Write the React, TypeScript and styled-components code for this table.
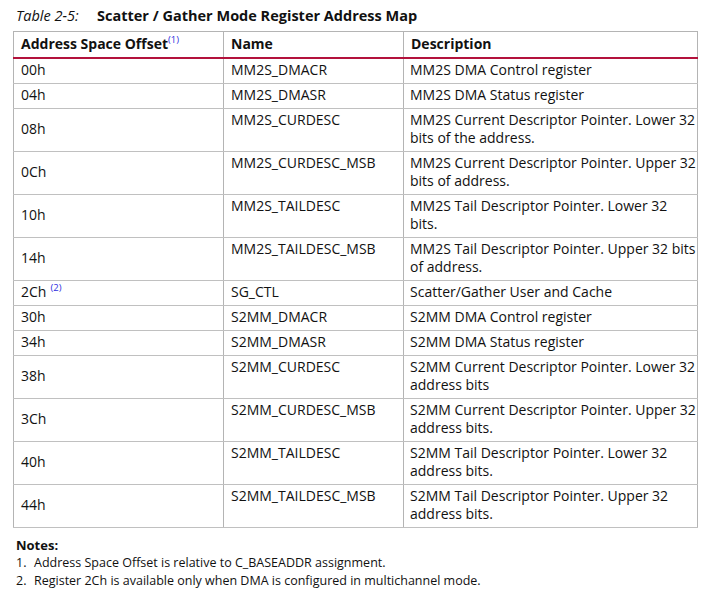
import React from 'react';
import styled, { createGlobalStyle } from 'styled-components';

const GlobalStyle = createGlobalStyle`
  body {
    margin: 0;
    background: #fff;
    font-family: 'Open Sans', 'Noto Sans', sans-serif;
    color: #111;
  }
`;

const Page = styled.div`
  width: 703px;
  padding: 6px 6px 0 13px;
  box-sizing: border-box;
`;

const Caption = styled.div`
  display: flex;
  align-items: baseline;
  height: 25px;
  padding-left: 3px;
  font-size: 14.5px;

  em {
    width: 81px;
    font-style: italic;
  }

  strong {
    font-weight: 700;
  }
`;

const Table = styled.table`
  width: 684px;
  border-collapse: collapse;
  table-layout: fixed;
  font-size: 14px;
  line-height: 18px;
`;

const HeadCell = styled.th<{ w: number }>`
  width: ${(p) => p.w}px;
  height: 26px;
  padding: 0 7px;
  text-align: left;
  font-weight: 700;
  border: 1px solid #b4b4b4;
  border-bottom: 2px solid #b3123c;
  box-sizing: border-box;
`;

const Row = styled.tr<{ dark?: boolean }>`
  td {
    border-top: 1px solid ${(p) => (p.dark ? '#8a8a8a' : '#c0c0c0')};
  }
`;

const Cell = styled.td<{ middle?: boolean }>`
  padding: 2px 7px 4px;
  vertical-align: ${(p) => (p.middle ? 'middle' : 'top')};
  white-space: pre;
  border-left: 1px solid #b4b4b4;
  border-right: 1px solid #b4b4b4;
  border-bottom: 1px solid #c0c0c0;

  &:last-child {
    padding: 2px 0 4px 6px;
  }
`;

const Sup = styled.sup<{ gap?: boolean }>`
  color: #3030e0;
  font-size: 9.5px;
  font-weight: 400;
  vertical-align: 6px;
  line-height: 0;
  margin-left: ${(p) => (p.gap ? '4px' : '0')};
`;

const Notes = styled.div`
  padding: 8px 0 0 3px;
  font-size: 12.5px;
`;

const NotesTitle = styled.div`
  font-weight: 700;
  font-size: 13px;
  line-height: 18px;
`;

const NoteItem = styled.div`
  display: flex;
  line-height: 18px;

  span:first-child {
    width: 18px;
  }
`;

type Reg = { off: string; name: string; desc: string; sup?: string; dark?: boolean };

const regs: Reg[] = [
  { off: '00h', name: 'MM2S_DMACR', desc: 'MM2S DMA Control register' },
  { off: '04h', name: 'MM2S_DMASR', desc: 'MM2S DMA Status register' },
  { off: '08h', name: 'MM2S_CURDESC', desc: 'MM2S Current Descriptor Pointer. Lower 32\nbits of the address.' },
  { off: '0Ch', name: 'MM2S_CURDESC_MSB', desc: 'MM2S Current Descriptor Pointer. Upper 32\nbits of address.' },
  { off: '10h', name: 'MM2S_TAILDESC', desc: 'MM2S Tail Descriptor Pointer. Lower 32\nbits.' },
  { off: '14h', name: 'MM2S_TAILDESC_MSB', desc: 'MM2S Tail Descriptor Pointer. Upper 32 bits\nof address.' },
  { off: '2Ch', name: 'SG_CTL', desc: 'Scatter/Gather User and Cache', sup: '(2)', dark: true },
  { off: '30h', name: 'S2MM_DMACR', desc: 'S2MM DMA Control register', dark: true },
  { off: '34h', name: 'S2MM_DMASR', desc: 'S2MM DMA Status register', dark: true },
  { off: '38h', name: 'S2MM_CURDESC', desc: 'S2MM Current Descriptor Pointer. Lower 32\naddress bits', dark: true },
  { off: '3Ch', name: 'S2MM_CURDESC_MSB', desc: 'S2MM Current Descriptor Pointer. Upper 32\naddress bits.' },
  { off: '40h', name: 'S2MM_TAILDESC', desc: 'S2MM Tail Descriptor Pointer. Lower 32\naddress bits.', dark: true },
  { off: '44h', name: 'S2MM_TAILDESC_MSB', desc: 'S2MM Tail Descriptor Pointer. Upper 32\naddress bits.' },
];

const App = () => {
  return (
    <Page>
      <GlobalStyle />
      <Caption>
        <em>Table 2-5:</em>
        <strong>Scatter / Gather Mode Register Address Map</strong>
      </Caption>
      <Table>
        <thead>
          <tr>
            <HeadCell w={210}>
              Address Space Offset<Sup>(1)</Sup>
            </HeadCell>
            <HeadCell w={180}>Name</HeadCell>
            <HeadCell w={294}>Description</HeadCell>
          </tr>
        </thead>
        <tbody>
          {regs.map((r) => (
            <Row key={r.off} dark={r.dark}>
              <Cell middle={!r.sup}>
                {r.off}
                {r.sup && <Sup gap>{r.sup}</Sup>}
              </Cell>
              <Cell>{r.name}</Cell>
              <Cell>{r.desc}</Cell>
            </Row>
          ))}
        </tbody>
      </Table>
      <Notes>
        <NotesTitle>Notes:</NotesTitle>
        <NoteItem>
          <span>1.</span>
          <span>Address Space Offset is relative to C_BASEADDR assignment.</span>
        </NoteItem>
        <NoteItem>
          <span>2.</span>
          <span>Register 2Ch is available only when DMA is configured in multichannel mode.</span>
        </NoteItem>
      </Notes>
    </Page>
  );
};

export default App;
